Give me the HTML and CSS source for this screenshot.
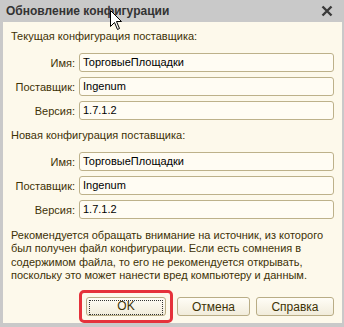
FILE: index.html
```html
<!DOCTYPE html>
<html lang="ru">
<head>
<meta charset="UTF-8">
<title>Обновление конфигурации</title>
<link rel="stylesheet" href="styles.css">
</head>
<body>

<div class="window">
  <div class="titlebar">
    <span class="title">Обновление конфигурации</span>
    <svg class="close" width="12" height="12" viewBox="0 0 12 12">
      <path d="M1.5 1.5 L10.5 10.5 M10.5 1.5 L1.5 10.5" stroke="#3a3a3a" stroke-width="2.4" fill="none"/>
    </svg>
  </div>

  <div class="content">
    <div class="section">Текущая конфигурация поставщика:</div>
    <div class="fields">
      <div class="row"><label>Имя:</label><div class="input">ТорговыеПлощадки</div></div>
      <div class="row"><label>Поставщик:</label><div class="input">Ingenum</div></div>
      <div class="row"><label>Версия:</label><div class="input">1.7.1.2</div></div>
    </div>

    <div class="section">Новая конфигурация поставщика:</div>
    <div class="fields">
      <div class="row"><label>Имя:</label><div class="input">ТорговыеПлощадки</div></div>
      <div class="row"><label>Поставщик:</label><div class="input">Ingenum</div></div>
      <div class="row"><label>Версия:</label><div class="input">1.7.1.2</div></div>
    </div>

    <p class="note">Рекомендуется обращать внимание на источник, из которого был получен файл конфигурации. Если есть сомнения в содержимом файла, то его не рекомендуется открывать, поскольку это может нанести вред компьютеру и данным.</p>

    <div class="buttons">
      <button class="btn btn-ok"><span>OK</span></button>
      <button class="btn btn-cancel">Отмена</button>
      <button class="btn btn-help">Справка</button>
    </div>
  </div>

  <div class="highlight"></div>

  <svg class="cursor" width="13" height="21" viewBox="0 0 13 21">
    <path d="M0.5 0.5 L0.5 16.5 L4.5 12.5 L7.5 19.5 L9.5 18.5 L6.5 11.5 L11.5 11.5 Z" fill="#fff" stroke="#000" stroke-width="1"/>
  </svg>
</div>

</body>
</html>
```

FILE: styles.css
```css
body {
  margin: 0;
  font-family: "Liberation Sans", Arial, sans-serif;
  font-size: 11px;
}

.window {
  position: relative;
  width: 344px;
  height: 327px;
  background: #c9c9c9;
  display: flex;
  flex-direction: column;
  box-sizing: border-box;
  padding: 0 2px 4px 3px;
}

.titlebar {
  height: 22px;
  display: flex;
  align-items: center;
  justify-content: space-between;
  padding: 0 9px 0 3px;
}

.title {
  font-weight: bold;
  font-size: 12px;
  color: #333;
}

.close { display: block; }

.content {
  flex: 1;
  background: #fdf9eb;
  padding: 8px 8px 0 8px;
  color: #3d3206;
  display: flex;
  flex-direction: column;
}

.section {
  line-height: 13px;
  margin-bottom: 10px;
}

.fields {
  display: flex;
  flex-direction: column;
  gap: 5px;
  margin-bottom: 9px;
}

.row {
  display: flex;
  align-items: center;
  gap: 4px;
}

.row label {
  width: 64px;
  text-align: right;
}

.input {
  flex: 1;
  height: 19px;
  box-sizing: border-box;
  border: 1px solid #bdb18a;
  border-radius: 3px;
  background: #fffcf3;
  color: #000;
  padding: 0 3px;
  line-height: 17px;
}

.note {
  margin: 1px 0 0 0;
  line-height: 13.3px;
}

.buttons {
  display: flex;
  justify-content: flex-end;
  gap: 6px;
  margin-top: 15px;
}

.btn {
  height: 19px;
  box-sizing: border-box;
  border: 1px solid #b9ad86;
  border-radius: 3px;
  background: linear-gradient(#fffdf6, #f1ecdb);
  color: #3d3206;
  font-family: inherit;
  font-size: 12px;
  padding: 0;
}

.btn-ok { width: 80px; margin-right: 5px; padding: 2px; }
.btn-ok span {
  display: block;
  height: 100%;
  border: 1px dotted #333;
  line-height: 11px;
}
.btn-cancel { width: 73px; }
.btn-help { width: 78px; }

.highlight {
  position: absolute;
  left: 79px;
  top: 290px;
  width: 94px;
  height: 33px;
  box-sizing: border-box;
  border: 3px solid #e5323b;
  border-radius: 5px;
}

.cursor {
  position: absolute;
  left: 110px;
  top: 10px;
}
```
